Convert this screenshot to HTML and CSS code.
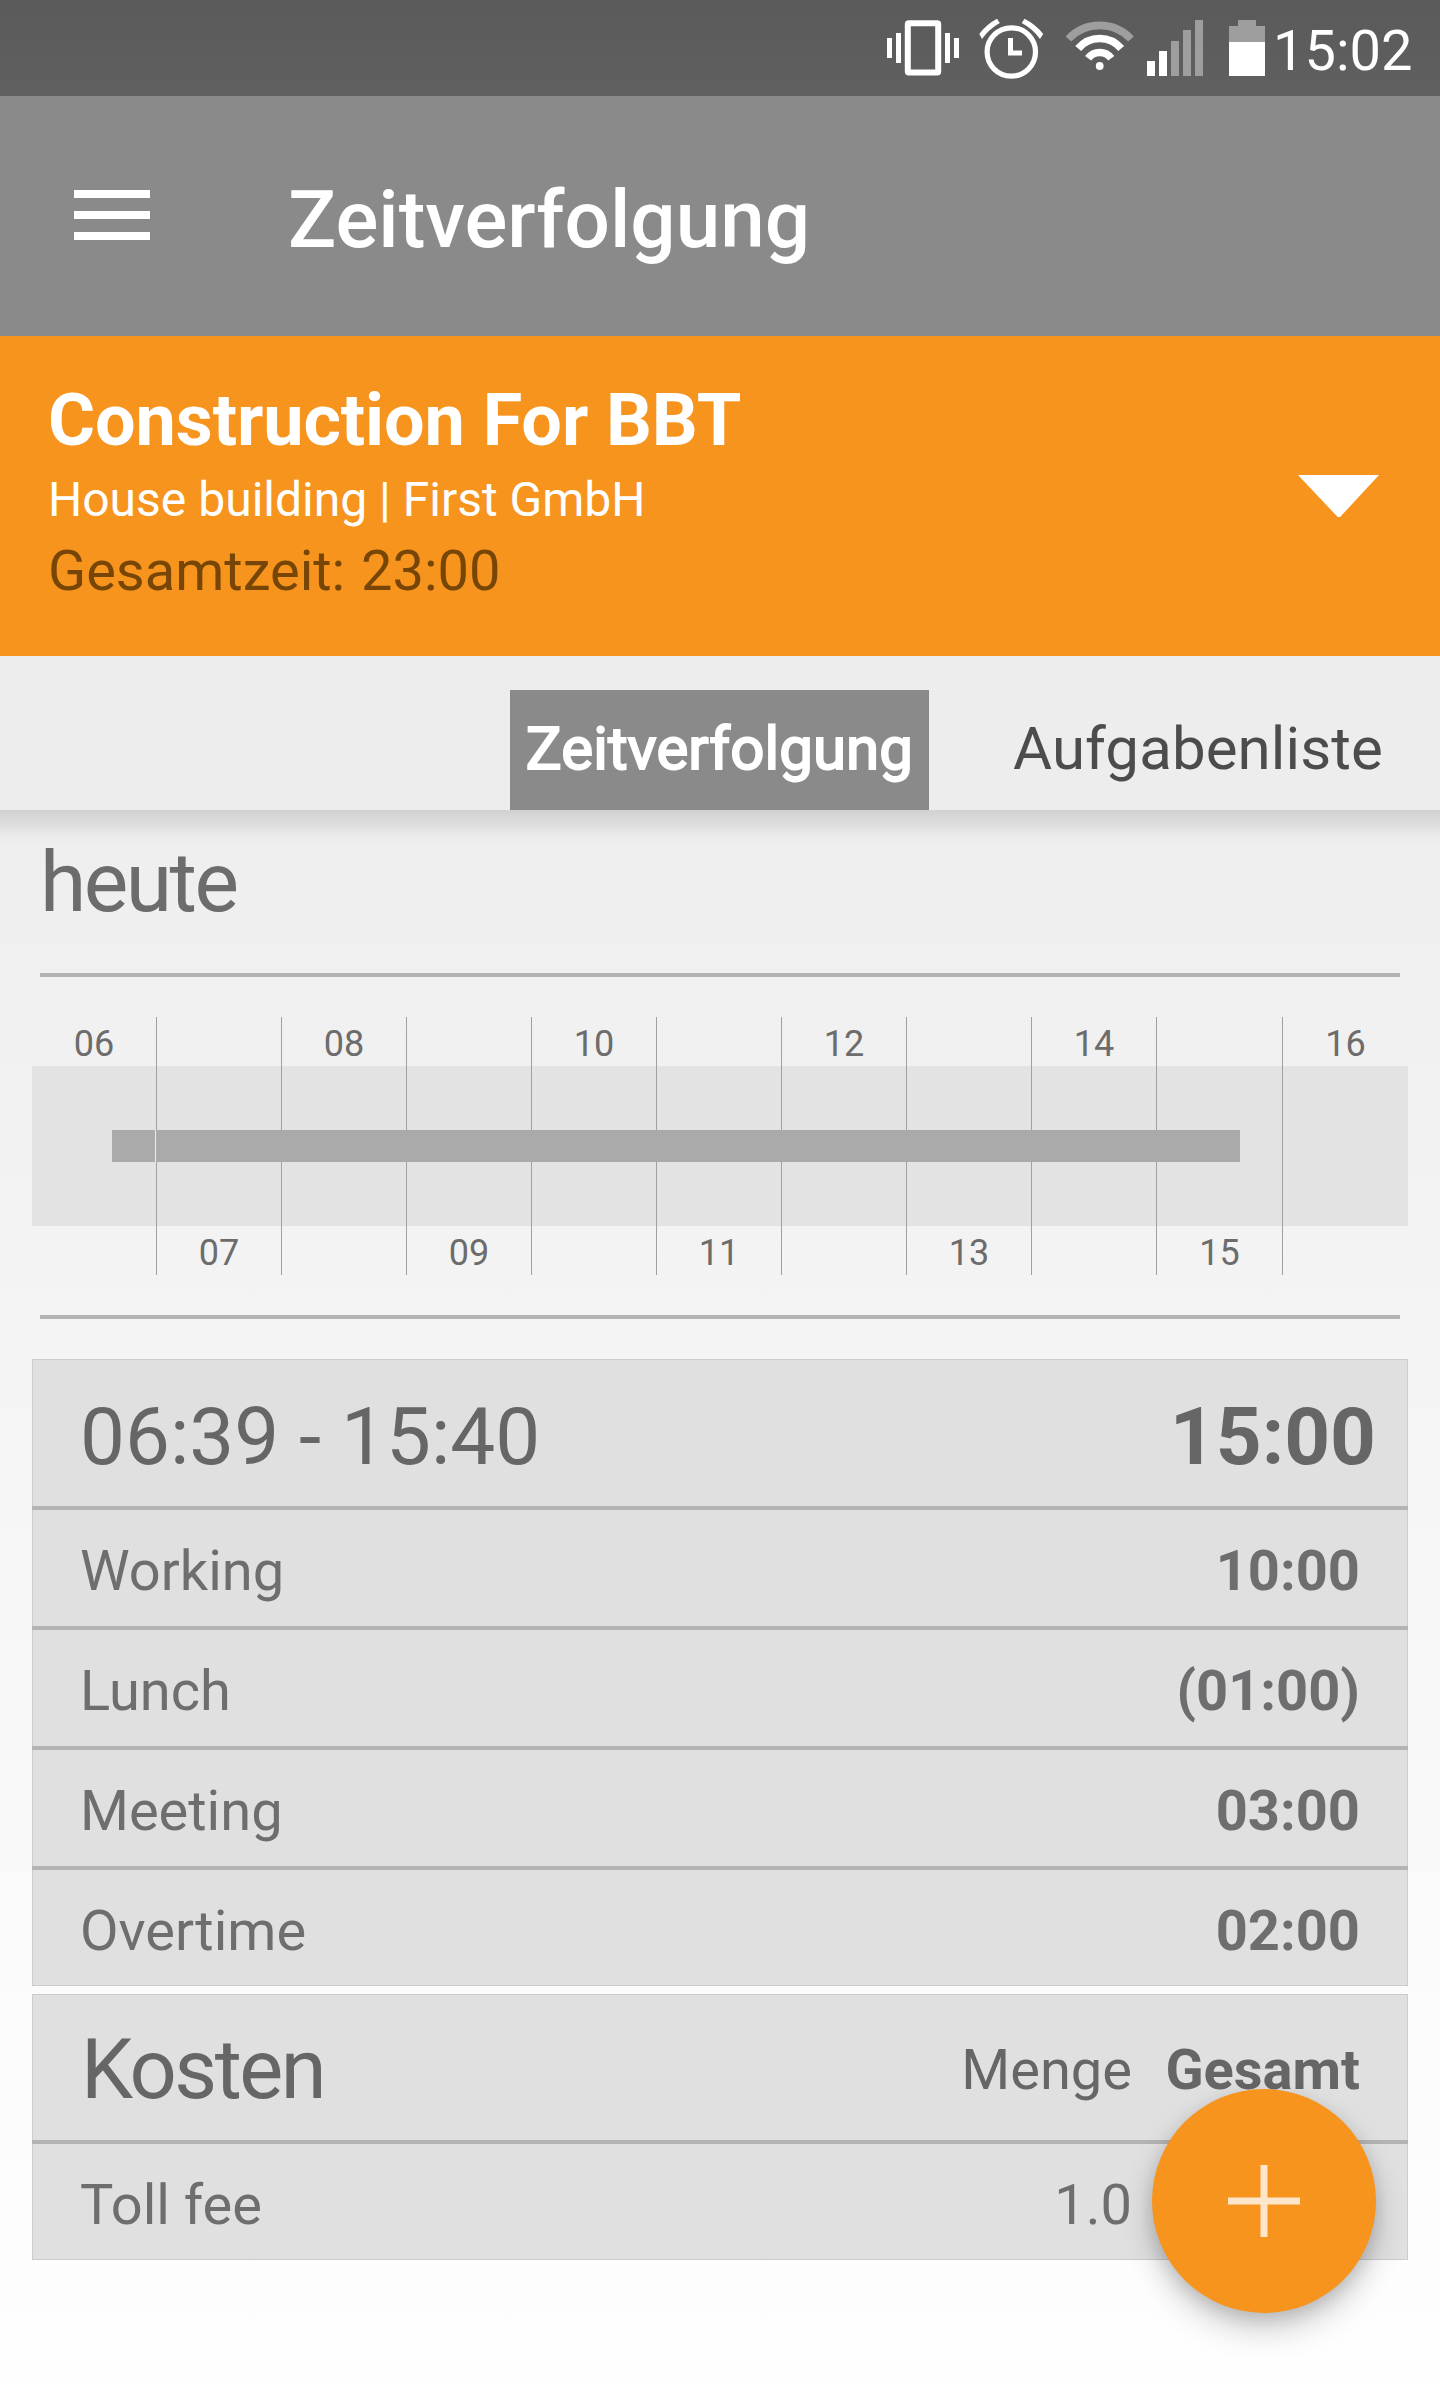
FILE: index.html
```html
<!DOCTYPE html>
<html lang="de">
<head>
    <meta charset="UTF-8">
    <meta name="viewport" content="width=device-width, initial-scale=1.0">
    <title>Zeitverfolgung</title>
    <link rel="stylesheet" href="styles.css">
</head>
<body>
    <div class="status-bar">
        <svg class="status-icons" width="390" height="96" viewBox="880 0 390 96" fill="#fff">
            <!-- vibrate -->
            <path d="M887 38h5v20h-5zM896 33h5v30h-5zM945 33h5v30h-5zM954 38h5v20h-5z"/>
            <rect x="907.8" y="23.3" width="30.4" height="49.2" rx="1" fill="none" stroke="#fff" stroke-width="6"/>
            <!-- alarm -->
            <circle cx="1011.3" cy="52" r="24.2" fill="none" stroke="#fff" stroke-width="5.2"/>
            <path d="M1008 38h5v12.6h9v5h-14z"/>
            <path d="M979.3 34Q986 24.5 997 18.7l2.8 4.3Q989 29 982 39zM1043.2 34Q1036 24.5 1024.5 18.7l-2.8 4.3Q1033 29 1040 39z"/>
            <!-- wifi -->
            <g fill="none" stroke="#fff" stroke-width="7.6">
                <path stroke="#9e9e9e" d="M1068.4 39A42.8 42.8 0 0 1 1131 39"/>
                <path d="M1078.2 48.5A28 28 0 0 1 1121.2 48.5"/>
                <path d="M1088.1 58.3A14.5 14.5 0 0 1 1111.3 58.3"/>
            </g>
            <circle cx="1099.7" cy="66" r="3.9"/>
            <!-- signal -->
            <path d="M1147 61h8v15h-8zM1159 51h8v25h-8z"/>
            <path fill="#9e9e9e" d="M1171 41h8v35h-8zM1183 30h8v46h-8zM1195 20h8v56h-8z"/>
            <!-- battery -->
            <path fill="#9e9e9e" d="M1238 20h18v6h9v16h-36V26h9z"/>
            <path d="M1229 42h36v34h-36z"/>
        </svg>
        <span class="clock">15:02</span>
    </div>

    <header class="toolbar">
        <div class="menu-icon"><span></span><span></span><span></span></div>
        <h1>Zeitverfolgung</h1>
    </header>

    <section class="project">
        <div class="project-info">
            <div class="project-name">Construction For BBT</div>
            <div class="project-client">House building | First GmbH</div>
            <div class="project-total">Gesamtzeit: 23:00</div>
        </div>
        <div class="arrow-down"></div>
    </section>

    <nav class="tabs">
        <div class="tab active">Zeitverfolgung</div>
        <div class="tab">Aufgabenliste</div>
    </nav>

    <main>
        <h2 class="day">heute</h2>

        <div class="timeline">
            <div class="hour">06</div>
            <div class="hour">07</div>
            <div class="hour">08</div>
            <div class="hour">09</div>
            <div class="hour">10</div>
            <div class="hour">11</div>
            <div class="hour">12</div>
            <div class="hour">13</div>
            <div class="hour">14</div>
            <div class="hour">15</div>
            <div class="hour">16</div>
            <div class="work first" style="left: 80px; width: 43px"></div>
            <div class="work" style="left: 124px; width: 1084px"></div>
        </div>

        <div class="card">
            <div class="card-head">
                <span class="big">06:39 - 15:40</span>
                <span class="big-total">15:00</span>
            </div>
            <div class="row"><span>Working</span><b>10:00</b></div>
            <div class="row"><span>Lunch</span><b>(01:00)</b></div>
            <div class="row"><span>Meeting</span><b>03:00</b></div>
            <div class="row"><span>Overtime</span><b>02:00</b></div>
        </div>

        <div class="card costs">
            <div class="card-head">
                <span class="big costs-title">Kosten</span>
                <span class="amount">Menge</span>
                <b class="sum">Gesamt</b>
            </div>
            <div class="row">
                <span>Toll fee</span>
                <span class="amount">1.0</span>
                <b class="sum"></b>
            </div>
        </div>
    </main>

    <button class="fab" aria-label="Add">
        <svg width="74" height="74" viewBox="0 0 74 74">
            <path d="M37 1v72M1 37h72" stroke="#fee6cb" stroke-width="7"/>
        </svg>
    </button>
</body>
</html>
```
FILE: styles.css
```css
* {
    margin: 0;
    padding: 0;
    box-sizing: border-box;
    font-family: Roboto, sans-serif;
}

body {
    position: relative;
    width: 1440px;
    height: 2384px;
    overflow: hidden;
    background: linear-gradient(#ebebeb 500px, #f4f4f4 1340px, #fbfbfb 1990px, #fefefe 2384px);
    color: #666;
}

.status-bar {
    display: flex;
    height: 96px;
    padding-left: 880px;
    background: linear-gradient(#5a5a5a, #606060);
    color: #fff;
}

.clock {
    margin-left: 3px;
    font-size: 56px;
    line-height: 102px;
}

.toolbar {
    display: flex;
    align-items: center;
    height: 240px;
    padding-left: 74px;
    background: #8a8a8a;
    color: #fff;
}

.menu-icon {
    display: flex;
    flex-direction: column;
    gap: 13px;
    width: 76px;
    margin-right: 138px;
    margin-bottom: 2px;
}

.menu-icon span {
    height: 8px;
    background: #fff;
}

.toolbar h1 {
    padding-top: 8px;
    font-size: 80px;
    font-weight: 500;
}

.project {
    display: flex;
    justify-content: space-between;
    height: 320px;
    padding: 42px 61px 0 48px;
    background: #f7941e;
    color: #fff;
}

.project-name {
    font-size: 72px;
    font-weight: 700;
    line-height: 85px;
    letter-spacing: -0.1px;
}

.project-client {
    font-size: 48px;
    line-height: 73px;
}

.project-total {
    font-size: 56px;
    line-height: 70px;
    word-spacing: 2px;
    color: #774607;
}

.arrow-down {
    width: 81px;
    height: 42px;
    margin-top: 97px;
    background: #fff;
    clip-path: polygon(0 0, 100% 0, 52% 100%, 49% 100%);
}

.tabs {
    position: relative;
    display: flex;
    align-items: flex-end;
    gap: 84px;
    height: 154px;
    padding-left: 510px;
    background: #ededed;
}

/* shadow only below the tabs */
.tabs::after {
    content: "";
    position: absolute;
    top: 100%;
    left: 0;
    right: 0;
    height: 36px;
    background: linear-gradient(rgba(0,0,0,0.12), rgba(0,0,0,0.07) 40%, rgba(0,0,0,0.015) 75%, transparent);
}

.tab {
    height: 120px;
    font-size: 60px;
    line-height: 118px;
    letter-spacing: 0.1px;
    color: #4c4c4c;
}

.tab.active {
    width: 419px;
    background: #8a8a8a;
    color: #fff;
    text-align: center;
    -webkit-text-stroke: 2px #fff;
}

.day {
    height: 167px;
    margin: 0 40px;
    border-bottom: 4px solid #b3b3b3;
    font-size: 84px;
    font-weight: 400;
    line-height: 145px;
    letter-spacing: -2.5px;
    color: #6c6c6c;
}

.timeline {
    position: relative;
    display: grid;
    grid-template-columns: repeat(9, 125px) 126px 125px;
    grid-template-rows: 258px;
    height: 258px;
    margin: 40px 32px;
    background: linear-gradient(transparent 49px, #e3e3e3 49px, #e3e3e3 209px, transparent 209px);
}

.hour {
    height: 258px;
    padding-top: 1px;
    border-right: 1px solid #a0a0a0;
    font-size: 36px;
    line-height: 53px;
    text-align: center;
    color: #6c6c6c;
}

.hour:nth-child(even) {
    padding-top: 210px;
}

.hour:nth-child(11) {
    border-right: none;
}

.work {
    position: absolute;
    top: 113px;
    height: 32px;
    background: #aaa;
}

.work.first {
    box-shadow: 1px 0 #ededed;
}

.card {
    margin: 0 32px 8px;
    border: 1px solid #ccc;
    background: #e0e0e0;
}

.timeline + .card {
    position: relative;
    margin-top: 84px;
}

/* divider between the timeline and the first card */
.timeline + .card::before {
    content: "";
    position: absolute;
    top: -45px;
    left: 7px;
    right: 7px;
    height: 4px;
    background: #b3b3b3;
}

.card-head {
    display: flex;
    align-items: center;
    height: 146px;
    padding: 7px 31px 0 47px;
}

.big {
    flex: 1;
    font-size: 80px;
}

.big-total {
    font-size: 80px;
    font-weight: 700;
}

.costs .card-head {
    height: 145px;
    padding: 5px 47px 0;
    font-size: 56px;
}

.costs .costs-title {
    padding: 0 0 2px 1px;
    font-size: 83px;
    letter-spacing: -2.5px;
}

.row {
    display: flex;
    justify-content: space-between;
    align-items: center;
    height: 120px;
    margin: 0 -1px;
    padding: 6px 48px 0;
    border-top: 4px solid #b3b3b3;
    font-size: 56px;
    color: #6e6e70;
}

.row:last-child {
    height: 119px;
}

.amount {
    margin-left: auto;
}

.sum {
    width: 228px;
    text-align: right;
}

.fab {
    position: absolute;
    top: 2089px;
    left: 1152px;
    display: flex;
    justify-content: center;
    align-items: center;
    width: 224px;
    height: 224px;
    border: none;
    border-radius: 50%;
    background: #f7941e;
    box-shadow: 0 16px 32px rgba(0,0,0,0.2), 0 6px 16px rgba(0,0,0,0.12);
}
```
